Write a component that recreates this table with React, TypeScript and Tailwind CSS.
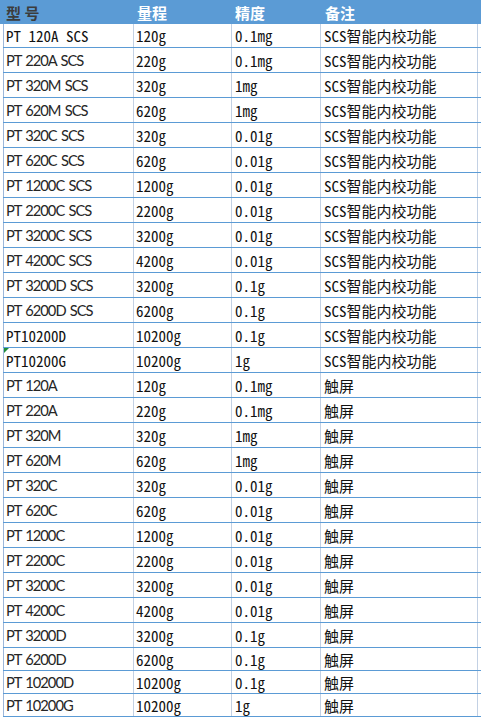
import React from "react";

type Row = { m: string; mono: boolean; r: string; p: string; n: string; tri?: boolean };

const scs = "SCS智能内校功能";
const rows: Row[] = [
  { m: "PT 120A SCS", mono: true, r: "120g", p: "0.1mg", n: scs },
  { m: "PT 220A SCS", mono: false, r: "220g", p: "0.1mg", n: scs },
  { m: "PT 320M SCS", mono: false, r: "320g", p: "1mg", n: scs },
  { m: "PT 620M SCS", mono: false, r: "620g", p: "1mg", n: scs },
  { m: "PT 320C SCS", mono: false, r: "320g", p: "0.01g", n: scs },
  { m: "PT 620C SCS", mono: false, r: "620g", p: "0.01g", n: scs },
  { m: "PT 1200C SCS", mono: false, r: "1200g", p: "0.01g", n: scs },
  { m: "PT 2200C SCS", mono: false, r: "2200g", p: "0.01g", n: scs },
  { m: "PT 3200C SCS", mono: false, r: "3200g", p: "0.01g", n: scs },
  { m: "PT 4200C SCS", mono: false, r: "4200g", p: "0.01g", n: scs },
  { m: "PT 3200D SCS", mono: false, r: "3200g", p: "0.1g", n: scs },
  { m: "PT 6200D SCS", mono: false, r: "6200g", p: "0.1g", n: scs },
  { m: "PT10200D", mono: true, r: "10200g", p: "0.1g", n: scs },
  { m: "PT10200G", mono: true, r: "10200g", p: "1g", n: scs, tri: true },
  { m: "PT 120A", mono: false, r: "120g", p: "0.1mg", n: "触屏" },
  { m: "PT 220A", mono: false, r: "220g", p: "0.1mg", n: "触屏" },
  { m: "PT 320M", mono: false, r: "320g", p: "1mg", n: "触屏" },
  { m: "PT 620M", mono: false, r: "620g", p: "1mg", n: "触屏" },
  { m: "PT 320C", mono: false, r: "320g", p: "0.01g", n: "触屏" },
  { m: "PT 620C", mono: false, r: "620g", p: "0.01g", n: "触屏" },
  { m: "PT 1200C", mono: false, r: "1200g", p: "0.01g", n: "触屏" },
  { m: "PT 2200C", mono: false, r: "2200g", p: "0.01g", n: "触屏" },
  { m: "PT 3200C", mono: false, r: "3200g", p: "0.01g", n: "触屏" },
  { m: "PT 4200C", mono: false, r: "4200g", p: "0.01g", n: "触屏" },
  { m: "PT 3200D", mono: false, r: "3200g", p: "0.1g", n: "触屏" },
  { m: "PT 6200D", mono: false, r: "6200g", p: "0.1g", n: "触屏" },
  { m: "PT 10200D", mono: false, r: "10200g", p: "0.1g", n: "触屏" },
  { m: "PT 10200G", mono: false, r: "10200g", p: "1g", n: "触屏" },
];

const monoCls =
  "font-['Noto_Sans_Mono_CJK_SC','Liberation_Mono',monospace] text-[15px] text-[#111] whitespace-nowrap";
const cjkCls = "font-['Noto_Sans_CJK_SC',sans-serif] text-[15px] text-[#111] whitespace-nowrap";
const sansCls =
  "font-['Lato',sans-serif] text-[14.7px] tracking-[-1px] [word-spacing:1.5px] text-[#262626] whitespace-nowrap";

function Note({ n }: { n: string }) {
  if (n.startsWith("SCS")) {
    return (
      <span className="whitespace-nowrap flex items-center">
        <span className={monoCls}>SCS</span>
        <span className={cjkCls}>{n.slice(3)}</span>
      </span>
    );
  }
  return <span className={cjkCls}>{n}</span>;
}

export default function App() {
  return (
    <div className="w-[481px] h-[718px] overflow-hidden bg-white">
      <div className="h-[24px] bg-[#5b9bd5] pl-[3px] grid grid-cols-[130px_98px_89px_160px] items-center font-['Noto_Sans_CJK_SC',sans-serif] text-[15px] font-bold leading-none">
        <div className="pl-[3px] text-[#3c3c3c]">型 号</div>
        <div className="pl-[4px] text-white">量程</div>
        <div className="pl-[4px] text-white">精度</div>
        <div className="pl-[5px] text-white">备注</div>
      </div>
      <div className="pl-[3px]">
        {rows.map((r, i) => (
          <div
            key={i}
            className={
              (i === 0 ? "h-[24px] " : i >= 25 ? "h-[23px] " : "h-[25px] ") +
              "relative grid grid-cols-[130px_98px_89px_158px] border-b border-[#5b9bd5] leading-none"
            }
          >
            <div className="flex items-center border-l border-[#9db7da] pl-[2px]">
              <span className={r.mono ? monoCls : sansCls}>{r.m}</span>
            </div>
            <div className="flex items-center border-l border-[#c3d1e4] pl-[2px]">
              <span className={monoCls}>{r.r}</span>
            </div>
            <div className="flex items-center border-l border-[#c3d1e4] pl-[3px]">
              <span className={monoCls}>{r.p}</span>
            </div>
            <div className="flex items-center border-l border-r border-[#c3d1e4] pl-[3px]">
              <Note n={r.n} />
            </div>
            {r.tri && (
              <div className="absolute left-[1px] top-0 w-0 h-0 border-t-[5px] border-r-[5px] border-t-[#1e8c3a] border-r-transparent" />
            )}
          </div>
        ))}
      </div>
    </div>
  );
}
